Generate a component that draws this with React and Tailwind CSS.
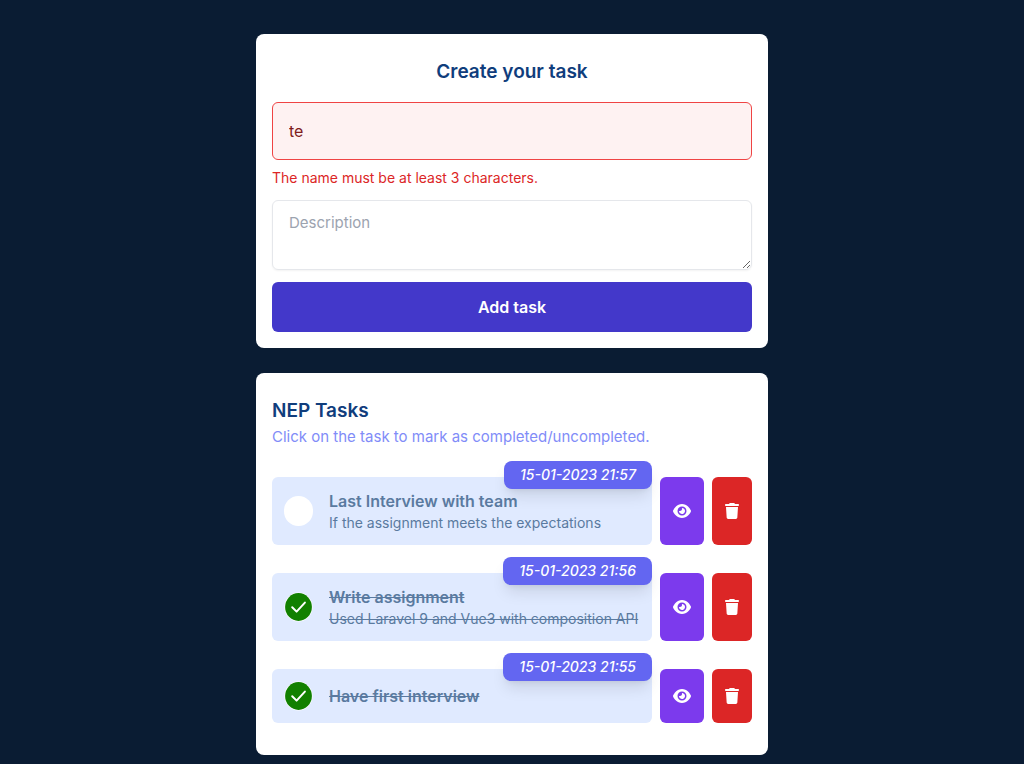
import { useState } from "react";
import { FaEye, FaTrash } from "react-icons/fa6";

const initialTasks = [
  {
    id: 3,
    name: "Last Interview with team",
    description: "If the assignment meets the expectations",
    createdAt: "15-01-2023 21:57",
    completed: false,
  },
  {
    id: 2,
    name: "Write assignment",
    description: "Used Laravel 9 and Vue3 with composition API",
    createdAt: "15-01-2023 21:56",
    completed: true,
  },
  {
    id: 1,
    name: "Have first interview",
    description: "",
    createdAt: "15-01-2023 21:55",
    completed: true,
  },
];

function StatusMark({ completed }) {
  if (!completed) {
    return <span className="h-[30px] w-[29px] shrink-0 rounded-full bg-white" />;
  }
  return (
    <svg viewBox="0 0 29 30" className="h-[30px] w-[29px] shrink-0" aria-hidden="true">
      <ellipse cx="14.5" cy="15" rx="14" ry="14.5" fill="#fff" />
      <ellipse cx="14.5" cy="15" rx="13.4" ry="13.9" fill="#118000" />
      <path
        d="M8.2 15.2l4.4 4.4 8.3-9"
        fill="none"
        stroke="#fff"
        strokeWidth="2"
        strokeLinecap="round"
        strokeLinejoin="round"
      />
    </svg>
  );
}

function TaskForm() {
  const [name, setName] = useState("te");
  const invalid = name.length < 3;
  return (
    <section className="rounded-lg bg-white px-4 pt-6 pb-4">
      <h2 className="text-center text-[19px] leading-7 font-semibold text-[#103d7c]">Create your task</h2>
      <form className="mt-4 flex flex-col" onSubmit={(e) => e.preventDefault()}>
        <input
          type="text"
          aria-label="Name"
          aria-invalid={invalid}
          aria-describedby="name-error"
          value={name}
          onChange={(e) => setName(e.target.value)}
          className="h-[58px] w-full rounded-md border border-[#ef4444] bg-[#fef2f2] px-4 text-base text-[#7f1d1d] outline-none"
        />
        <p id="name-error" className="mt-2 text-sm leading-5 text-[#dc2626]">
          The name must be at least 3 characters.
        </p>
        <textarea
          aria-label="Description"
          placeholder="Description"
          className="mt-3 h-[70px] w-full rounded-md border border-[#e5e7eb] px-4 py-2.5 text-[15px] leading-6 shadow-xs outline-none placeholder:text-[#9ca3af]"
        />
        <button
          type="submit"
          className="mt-3 h-[50px] w-full rounded-md bg-[#4338ca] text-base font-semibold text-white"
        >
          Add task
        </button>
      </form>
    </section>
  );
}

function TaskRow({ task, onToggle, onDelete }) {
  const strike = task.completed ? "line-through" : "";
  return (
    <li className="flex gap-2">
      <button
        type="button"
        onClick={onToggle}
        className="relative flex min-w-0 flex-1 items-center rounded-md bg-[#e0eaff] p-3 text-left text-[#5a7aa0]"
      >
        <StatusMark completed={task.completed} />
        <span className="ml-4 flex min-h-[30px] flex-col justify-center">
          <span className={`text-base leading-6 font-semibold ${strike}`}>{task.name}</span>
          {task.description && <span className={`text-sm leading-5 ${strike}`}>{task.description}</span>}
        </span>
        <time className="absolute -top-4 right-0 rounded-lg bg-[#6366f1] px-4 py-1 text-sm leading-5 font-medium text-white italic shadow-lg">
          {task.createdAt}
        </time>
      </button>
      <button
        type="button"
        aria-label={`View ${task.name}`}
        className="flex w-11 items-center justify-center rounded-md bg-[#7c3aed] text-white"
      >
        <FaEye className="h-4 w-[18px]" />
      </button>
      <button
        type="button"
        aria-label={`Delete ${task.name}`}
        onClick={onDelete}
        className="flex w-10 items-center justify-center rounded-md bg-[#dc2626] text-white"
      >
        <FaTrash className="h-4 w-3.5" />
      </button>
    </li>
  );
}

export default function App() {
  const [tasks, setTasks] = useState(initialTasks);
  const toggle = (id) =>
    setTasks((list) => list.map((t) => (t.id === id ? { ...t, completed: !t.completed } : t)));
  const remove = (id) => setTasks((list) => list.filter((t) => t.id !== id));

  return (
    <main className="min-h-screen bg-[#0a1c33] pt-[34px] pb-2 font-[Inter,sans-serif]">
      <div className="mx-auto flex w-full max-w-lg flex-col gap-[25px]">
        <TaskForm />
        <section className="rounded-lg bg-white px-4 pt-6 pb-8">
          <h2 className="text-[19px] leading-7 font-semibold text-[#103d7c]">NEP Tasks</h2>
          <p className="text-[15px] leading-6 text-[#818cf8]">
            Click on the task to mark as completed/uncompleted.
          </p>
          <ul className="mt-7 flex flex-col gap-7">
            {tasks.map((task) => (
              <TaskRow
                key={task.id}
                task={task}
                onToggle={() => toggle(task.id)}
                onDelete={() => remove(task.id)}
              />
            ))}
          </ul>
        </section>
      </div>
    </main>
  );
}
